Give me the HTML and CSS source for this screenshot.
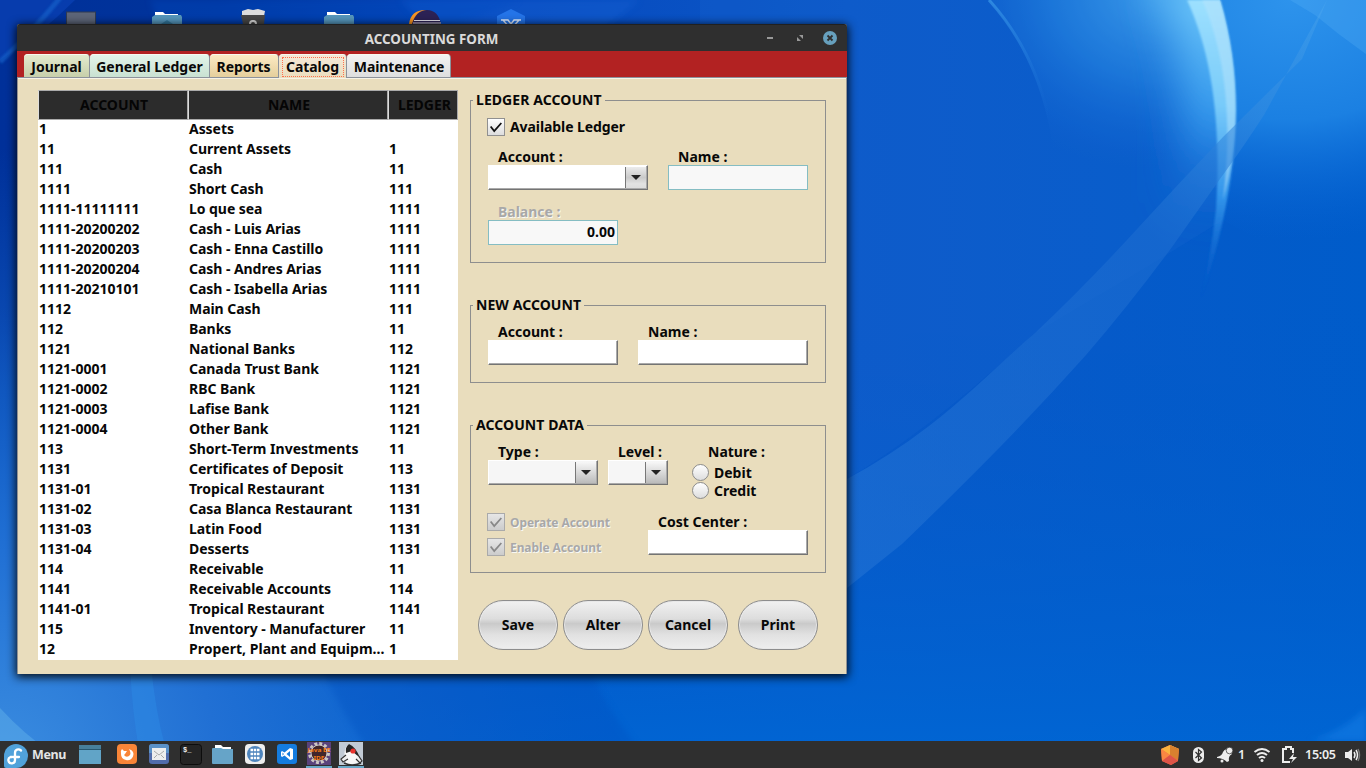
FILE: index.html
```html
<!DOCTYPE html>
<html lang="en">
<head>
<meta charset="utf-8">
<title>Accounting Form</title>
<link rel="stylesheet" href="styles.css">
</head>
<body>
<div class="desktop">
<svg class="wallpaper" viewBox="0 0 1366 768" preserveAspectRatio="none" aria-hidden="true">
<defs>
<linearGradient id="base"><stop offset="0" stop-color="#003099"/><stop offset=".16" stop-color="#00349c"/><stop offset=".36" stop-color="#0648bd"/><stop offset=".62" stop-color="#0b58c8"/><stop offset="1" stop-color="#005cca"/></linearGradient>
<linearGradient id="low" x1="0" y1="0" x2="0" y2="1"><stop offset=".4" stop-color="#0058c8" stop-opacity="0"/><stop offset="1" stop-color="#0066d4"/></linearGradient>
<radialGradient id="glowA" gradientUnits="userSpaceOnUse" cx="0" cy="0" r="1" gradientTransform="translate(1160 -10) scale(220 180)"><stop offset="0" stop-color="#46aaf2"/><stop offset=".5" stop-color="#2182e0" stop-opacity=".8"/><stop offset="1" stop-color="#1164d4" stop-opacity="0"/></radialGradient>
<radialGradient id="glowB" gradientUnits="userSpaceOnUse" cx="0" cy="0" r="1" gradientTransform="translate(1290 0) scale(330 240)"><stop offset="0" stop-color="#2d93ec"/><stop offset=".5" stop-color="#1b80e2"/><stop offset="1" stop-color="#0562d4" stop-opacity="0"/></radialGradient>
<radialGradient id="glowC" gradientUnits="userSpaceOnUse" cx="0" cy="768" r="620"><stop offset="0" stop-color="#3b8de0"/><stop offset=".35" stop-color="#2170d4"/><stop offset="1" stop-color="#1164ce" stop-opacity="0"/></radialGradient>
<linearGradient id="arc" x1="0" y1="0" x2="0" y2="1"><stop offset="0" stop-color="#a4e4ff"/><stop offset=".35" stop-color="#7fd0fc"/><stop offset=".65" stop-color="#369aee"/><stop offset="1" stop-color="#0a5ac8" stop-opacity="0"/></linearGradient>
<linearGradient id="rim" gradientUnits="userSpaceOnUse" x1="0" y1="0" x2="0" y2="230"><stop offset="0" stop-color="#6cc6fa"/><stop offset=".5" stop-color="#359aee"/><stop offset="1" stop-color="#1468d4" stop-opacity="0"/></linearGradient>
<linearGradient id="fade" x1="0" y1="0" x2="0" y2="1"><stop offset="0" stop-color="#46a8f0"/><stop offset="1" stop-color="#1668d4" stop-opacity="0"/></linearGradient>
<linearGradient id="band" gradientUnits="userSpaceOnUse" x1="847" y1="560" x2="1327" y2="0"><stop offset="0" stop-color="#2272d4"/><stop offset=".6" stop-color="#1c6cd0"/><stop offset="1" stop-color="#48a4ec" stop-opacity=".8"/></linearGradient>
<clipPath id="inside"><path d="M989 0H1220C1241 72 1240 142 1223 220L1190 320H1050V130Q1035 55 989 0Z"/></clipPath>
<filter id="soft" x="-50%" y="-50%" width="200%" height="200%"><feGaussianBlur stdDeviation="3"/></filter>
<filter id="wide" filterUnits="userSpaceOnUse" x="900" y="-100" width="460" height="500"><feGaussianBlur stdDeviation="20"/></filter>
<filter id="slight"><feGaussianBlur stdDeviation=".8"/></filter>
</defs>
<rect width="1366" height="768" fill="url(#base)"/>
<rect width="1366" height="768" fill="url(#low)"/>
<path d="M1220 0Q1250 110 1223 220L1366 300V0Z" fill="url(#glowB)"/>
<path d="M989 0Q1035 55 1050 130L1060 200H1216L1236 110L1220 0Z" fill="url(#glowA)"/>
<path d="M700 0H1220C1241 72 1240 142 1223 220L1150 265L1035 333Q930 430 847 479L700 550Z" fill="#1c68d0" opacity=".22"/>
<g clip-path="url(#inside)"><path d="M1192 -30Q1232 90 1205 210" fill="none" stroke="url(#rim)" stroke-width="70" filter="url(#wide)"/></g>
<path d="M989 0Q1034 50 1049 120" fill="none" stroke="url(#fade)" stroke-width="3" opacity=".55"/>
<path d="M1187 0H1220C1241 72 1240 142 1223 220Q1214 262 1200 302Q1211 255 1216 210C1221 130 1214 58 1187 0Z" fill="url(#arc)" opacity=".9" filter="url(#slight)"/>
<path d="M1202 0H1220C1241 72 1240 142 1223 200C1232 130 1228 58 1202 0Z" fill="#b8e4fc" opacity=".5" filter="url(#slight)"/>
<path d="M847 479Q890 456 929 426C967 397 1000 363 1035 333Q1086 285 1138 228Q1180 182 1223 137L1302 59L1327 0L1264 115Q1242 149 1220 179L1172 247Q1130 304 1086 355Q1045 401 1001 446T902 544L847 588Z" fill="url(#band)" opacity=".6"/>
<path d="M1315 15L1290 0H1366V54Q1340 36 1315 15Z" fill="#55b0f5" opacity=".3"/>
<path d="M1366 708Q1345 730 1310 741H1366Z" fill="#1680e8" opacity=".5" filter="url(#soft)"/>
<path d="M0 0H75Q40 35 0 60Z" fill="#0b44bb" opacity=".6"/>
<path d="M60 -2Q32 32 0 62" fill="none" stroke="#1764cc" stroke-width="5" opacity=".65" filter="url(#slight)"/>
<path d="M400 0H640L590 40H440Z" fill="#1262d4" opacity=".4" filter="url(#soft)"/>
<path d="M150 0H520L420 40H165Z" fill="#064cc2" opacity=".35" filter="url(#soft)"/>
<rect width="1366" height="768" fill="url(#glowC)"/>
<path d="M130 665Q132 710 139 750H166Q155 710 151 665Z" fill="#2b88e4" opacity=".55"/>
<path d="M0 708Q25 735 48 750H0Z" fill="#59a9e8" opacity=".6"/>
<path d="M320 665Q340 710 368 750H640Q600 700 590 665Z" fill="#0650c0" opacity=".35" filter="url(#soft)"/>
</svg>
<div class="launchers" aria-hidden="true">
<svg viewBox="0 0 500 24"><rect x="6.500" y="12" width="29" height="14" fill="#5d6578" stroke="#303b51"/><path d="M95 15V12H103L105 14H118V17H95Z" fill="#fff"/><path d="M92 17L95 15H121L122 17V24H92Z" fill="#5697bd"/><path d="M101 24L107 20L113 24" fill="#33789e"/><path d="M182 11L188 9L193 10L198 9L205 11L204 16H182Z" fill="#ddd"/><path d="M181 15H205L204 24H183Z" fill="#464646"/><circle cx="193" cy="24" r="3" fill="none" stroke="#ddd" stroke-width="2"/><path d="M267 15V12H275L277 14H290V17H267Z" fill="#fff"/><path d="M264 17L267 15H293L294 17V24H264Z" fill="#5697bd"/><path d="M349 24Q351 9 367 10Q355 14 354 24Z" fill="#f79423"/><path d="M352 24Q356 10 367 10T381 24Z" fill="#2c2255"/><path d="M354 20.500H380M353 23H381" stroke="#e8e5f0"/><path d="M437 16L451 9L465 16V24H437Z" fill="#2474e8"/><path d="M441 20H448L451 24L454 20H461M443 20L449 27M459 20L453 27" fill="none" stroke="#dceaff" stroke-width="1.500"/></svg>
</div>
<main class="window">
<header class="titlebar"><span class="caption">ACCOUNTING FORM</span>
<svg class="controls" viewBox="0 0 80 20"><path d="M4 10H10" stroke="#999" stroke-width="2"/><path d="M36 7H40V11ZM34 9V13H38Z" fill="#999"/><circle cx="67" cy="10" r="7" fill="#67a0bd"/><path d="M64.500 7.500L69.500 12.500M69.500 7.500L64.500 12.500" stroke="#2f2f2f" stroke-width="1.800"/></svg></header>
<nav class="tabs"><span class="tab journal">Journal</span><span class="tab general">General Ledger</span><span class="tab reports">Reports</span><span class="tab catalog"><span class="focus">Catalog</span></span><span class="tab maintenance">Maintenance</span></nav>
<section class="content">
<table class="accounts"><colgroup><col class="c1"><col class="c2"><col class="c3"></colgroup>
<thead><tr><th>ACCOUNT</th><th>NAME</th><th>LEDGER</th></tr></thead>
<tbody>
<tr><td>1</td><td>Assets</td><td></td></tr>
<tr><td>11</td><td>Current Assets</td><td>1</td></tr>
<tr><td>111</td><td>Cash</td><td>11</td></tr>
<tr><td>1111</td><td>Short Cash</td><td>111</td></tr>
<tr><td>1111-11111111</td><td>Lo que sea</td><td>1111</td></tr>
<tr><td>1111-20200202</td><td>Cash - Luis Arias</td><td>1111</td></tr>
<tr><td>1111-20200203</td><td>Cash - Enna Castillo</td><td>1111</td></tr>
<tr><td>1111-20200204</td><td>Cash - Andres Arias</td><td>1111</td></tr>
<tr><td>1111-20210101</td><td>Cash - Isabella Arias</td><td>1111</td></tr>
<tr><td>1112</td><td>Main Cash</td><td>111</td></tr>
<tr><td>112</td><td>Banks</td><td>11</td></tr>
<tr><td>1121</td><td>National Banks</td><td>112</td></tr>
<tr><td>1121-0001</td><td>Canada Trust Bank</td><td>1121</td></tr>
<tr><td>1121-0002</td><td>RBC Bank</td><td>1121</td></tr>
<tr><td>1121-0003</td><td>Lafise Bank</td><td>1121</td></tr>
<tr><td>1121-0004</td><td>Other Bank</td><td>1121</td></tr>
<tr><td>113</td><td class="long">Short-Term Investments</td><td>11</td></tr>
<tr><td>1131</td><td>Certificates of Deposit</td><td>113</td></tr>
<tr><td>1131-01</td><td>Tropical Restaurant</td><td>1131</td></tr>
<tr><td>1131-02</td><td>Casa Blanca Restaurant</td><td>1131</td></tr>
<tr><td>1131-03</td><td>Latin Food</td><td>1131</td></tr>
<tr><td>1131-04</td><td>Desserts</td><td>1131</td></tr>
<tr><td>114</td><td>Receivable</td><td>11</td></tr>
<tr><td>1141</td><td>Receivable Accounts</td><td>114</td></tr>
<tr><td>1141-01</td><td>Tropical Restaurant</td><td>1141</td></tr>
<tr><td>115</td><td>Inventory - Manufacturer</td><td>11</td></tr>
<tr><td>12</td><td class="long">Propert, Plant and Equipm...</td><td>1</td></tr>
</tbody></table>
<div class="form">
<section class="group ledger"><h2>LEDGER ACCOUNT</h2>
<div class="check"><svg viewBox="0 0 18 18"><path d="M3 8.500L7 13.500L15 4.500" /></svg><span>Available Ledger</span></div>
<div class="row first"><div class="field w160"><span class="label">Account :</span><div class="combo white"><i></i></div></div><div class="field w140"><span class="label">Name :</span><div class="input locked"></div></div></div>
<div class="row second"><div class="field w130"><span class="label dim">Balance :</span><div class="input locked">0.00</div></div></div>
</section>
<section class="group fresh"><h2>NEW ACCOUNT</h2>
<div class="row"><div class="field w130"><span class="label">Account :</span><div class="input"></div></div><div class="field w170"><span class="label">Name :</span><div class="input"></div></div></div>
</section>
<section class="group data"><h2>ACCOUNT DATA</h2>
<div class="row tight"><div class="field w110"><span class="label">Type :</span><div class="combo"><i></i></div></div><div class="field w60"><span class="label">Level :</span><div class="combo"><i></i></div></div>
<div class="nature"><span class="label">Nature :</span><div class="radio"><i></i>Debit</div><div class="radio"><i></i>Credit</div></div></div>
<div class="row bottom"><div class="checks"><div class="check off"><svg viewBox="0 0 18 18"><path d="M3 8.500L7 13.500L15 4.500"/></svg><span>Operate Account</span></div><div class="check off"><svg viewBox="0 0 18 18"><path d="M3 8.500L7 13.500L15 4.500"/></svg><span>Enable Account</span></div></div><div class="field w160"><span class="label">Cost Center :</span><div class="input"></div></div></div>
</section>
<div class="actions"><span class="button">Save</span><span class="button">Alter</span><span class="button">Cancel</span><span class="button print">Print</span></div>
</div>
</section>
</main>
<footer class="panel">
<svg class="menu-icon" viewBox="0 0 24 24"><path d="M0 12A12 12 0 1 1 12 24H2Q0 24 0 22Z" fill="#51a2da"/><path d="M8 13H6.500A3.300 3.300 0 1 0 11 16V9C11 5.500 14.500 4.500 17 6.500M9 13H15" fill="none" stroke="#fff" stroke-width="2.300" stroke-linecap="round"/></svg>
<span class="menu">Menu</span>
<svg class="apps" viewBox="0 0 290 27">
<path d="M0 4H22V23H0Z" fill="#61a4c7"/><path d="M0 4H22V8H0Z" fill="#477f9b"/><path d="M0 8.500H22" stroke="#28576f"/>
<rect x="38" y="3" width="20" height="20" rx="4" fill="#f98538"/><path d="M42 13Q41 10 43 8L45 10L48 10L46 13L45 14Q47 17 50 15Q53 13 50 8Q56 10 54 15.500Q52 20 47 19Q42 18 42 13Z" fill="#fff"/>
<rect x="70" y="3" width="20" height="20" rx="3" fill="#526cab"/><path d="M70 6Q70 3 73 3H87Q90 3 90 6V12H70Z" fill="#5a91c8"/><rect x="73" y="7" width="14" height="12" fill="#eee"/><path d="M75 10L80 14L85 10M75 17L78 14M85 17L82 14" fill="none" stroke="#aaa"/>
<rect x="101.500" y="3.500" width="21" height="20" rx="3" fill="#242424" stroke="#0c0c0c"/><text x="104" y="11" class="prompt">$_</text>
<path d="M136 8V4H142L144 6H152V9H136Z" fill="#fff"/><path d="M133 8Q133 7 134 7H142L144 8H154V22Q154 23 153 23H134Q133 23 133 22Z" fill="#66a4c8"/>
<rect x="166" y="3" width="20" height="20" rx="4" fill="#eee"/><circle cx="176" cy="13" r="8" fill="#4d84bd"/><path d="M171.500 9H180.500M171.500 13H180.500M171.500 17H180.500" stroke="#fff" stroke-width="2.500" stroke-dasharray="2.500 .75"/>
<rect x="198" y="3" width="20" height="20" rx="3" fill="#147cdf"/><path d="M211 7L214 8V18L211 19L205.500 14.500L203 16L202 15V11L203 10L205.500 11.500ZM211 10L207.500 13L211 16Z M203.500 11.500V14.500L205 13Z" fill="#fff" fill-rule="evenodd"/>
<rect x="228" y="1" width="24" height="23" fill="#59427b"/><circle cx="240" cy="12" r="9" fill="none" stroke="#ccc6c3" stroke-width="4" stroke-dasharray="2.800 1.910"/><circle cx="240" cy="12" r="8" fill="#42262b" stroke="#ccc6c3"/><text x="240" y="11" class="eclipse" textLength="23" lengthAdjust="spacingAndGlyphs">Java EE</text><text x="240" y="19" class="eclipse" textLength="11" lengthAdjust="spacingAndGlyphs">IDE</text><path d="M227 26H253" stroke="#69a8c7" stroke-width="2"/>
<rect x="260" y="1" width="24" height="23" fill="#c2cbd5"/><path d="M267 22Q263 8 270 3Q279 9 282 20Q274 25 267 22Z" fill="#f7f7f7"/><path d="M267 12Q266 6 270 3Q277 6 281 17L273 10Z" fill="#252525"/><path d="M267 14L262 18L264 21L269 18M279 14L283 20L281 22L277 18" fill="#eee" stroke="#333" stroke-width="1.200"/><path d="M265 22Q273 26 282 22" fill="none" stroke="#333" stroke-width="1.500"/><circle cx="274" cy="10" r="2.600" fill="#e9332d"/><path d="M259 26H285" stroke="#69a8c7" stroke-width="2"/>
</svg>
<svg class="tray" viewBox="0 0 206 27"><path d="M10 4L19 8L18 20L11 24L2 20L1 8Z" fill="#f06b43"/><path d="M10 4L19 8L10 14L1 8Z" fill="#fbb33e"/><path d="M10 4L10 14L18 19L19 8Z" fill="#d8812f"/><path d="M1 8L10 14L2 20Z" fill="#fa8742"/><path d="M2 20L10 14L18 20L11 24Z" fill="#de5448"/>
<rect x="33" y="6" width="11" height="16" rx="5.500" fill="#ededed"/><path d="M35.500 11L41.500 17L38.500 19.500V8.500L41.500 11L35.500 17" fill="none" stroke="#303030" stroke-width="1.200"/>
<path d="M57 16Q62 15 63 11Q65 7 69 9L72 13Q68 15 69 20L67 21Q63 17 57 17Z" fill="#ededed"/><circle cx="69.500" cy="9.500" r="3.300" fill="#ededed" stroke="#303030" stroke-width=".7"/><circle cx="62" cy="20" r="1.500" fill="#ededed"/><text x="78" y="18">1</text>
<path d="M94.500 11Q102 5 109.500 11M97 14Q102 10 107 14M99 17Q102 14.500 105 17" fill="none" stroke="#ededed" stroke-width="2"/><circle cx="102" cy="19.500" r="1.500" fill="#ededed"/>
<path d="M133 12V8H131V6H126V8H123V21H130" fill="none" stroke="#ededed" stroke-width="2"/><path d="M134 12L129 18H133L131 22L137 16H133Z" fill="#ededed"/>
<text x="145" y="18" textLength="31">15:05</text><path d="M185 11H188L192 8V20L188 17H185Z" fill="#ededed"/><path d="M194 11Q196 14 194 17M196 9Q199 14 196 19" fill="none" stroke="#ededed" stroke-width="1.500"/><path d="M198 8Q201 14 198 20" fill="none" stroke="#777" stroke-width="1.500"/></svg>
</footer>
</div>
</body></html>
```
FILE: styles.css
```css
*{box-sizing:border-box}
body{margin:0;overflow:hidden;font:700 14px/20px "Noto Sans",sans-serif;color:#080808}
.desktop{position:relative;width:1366px;height:768px;overflow:hidden;background:#0055c2}
.wallpaper{position:absolute;inset:0;width:1366px;height:768px}
.launchers{position:absolute;left:60px;top:0;width:500px;height:24px}
.launchers svg{display:block;width:500px;height:24px}
.window{position:absolute;left:17px;top:24px;width:830px;height:650px;display:flex;flex-direction:column;background:#e9ddbd;border-radius:3px 3px 0 0;box-shadow:0 2px 10px 1px rgba(0,0,0,.9)}
.titlebar{height:27px;background:#2f2f2f;border-top:1px solid #202020;border-radius:3px 3px 0 0;display:grid;grid-template-columns:746px 80px;align-items:center}
.caption{padding-left:83px;text-align:center;color:#dadada;font-size:13.400px;line-height:26px;padding-top:1px}
.controls{width:80px;height:20px;margin-top:-2px}
.tabs{height:27px;padding:3px 0 0 7px;background:#b22222;display:flex;border-bottom:1px solid #8c929b}
.tab{height:23px;border:1px solid #8c929b;border-width:0 1px 0 0;border-radius:4px 4px 0 0;text-align:center;line-height:26px;white-space:nowrap;box-shadow:inset 0 1px #f8f8ee}
.journal{width:66px;background:linear-gradient(#e4ebd0,#c7cfaa)}
.general{width:120px;background:linear-gradient(#e4f5ea,#c9e1d2)}
.reports{width:69px;background:linear-gradient(#fcebc5,#e5cf9c);letter-spacing:-.1px;padding-right:1px}
.catalog{width:68px;height:25px;background:linear-gradient(#f6e9d8,#e9ddbd);padding:3px 2px 2px 3px}
.focus{display:block;height:20px;border:1px dotted #ff704d;line-height:17px;letter-spacing:-.1px;padding-right:1px}
.maintenance{width:104px;background:linear-gradient(#f3f3f3,#dedede);letter-spacing:-.1px;padding-left:1px}
.content{height:596px;border:1px solid #929292;border-width:0 1px 0;box-shadow:inset 0 1px #f7f3e6;padding:12px 20px;display:flex;gap:12px}
.accounts{width:420px;height:570px;border-spacing:0;table-layout:fixed;background:#fff;flex:none}
.c1{width:150px}.c2{width:200px}.c3{width:70px}
.accounts th{height:30px;padding:0 0 0 2px;background:#2c2c2c;color:#050505;border:1px solid #aaa;border-left-color:#ddd;font-size:14px}
.accounts th:last-child{padding-left:3px}
.accounts td{height:20px;padding:0 0 2px 1px;line-height:18px;white-space:nowrap}
.accounts td:nth-child(2){letter-spacing:-.05px}
.accounts td.long{letter-spacing:.02px}
.form{width:356px;padding-top:10px;flex:none}
.group{position:relative;border:1px solid #8e8e8e;padding:18px 17px 0}
.group h2{position:absolute;left:2px;top:-11px;margin:0;padding:0 3px;background:#e9ddbd;font-size:14px;line-height:20px;white-space:nowrap;letter-spacing:.07px}
.ledger{height:163px;padding-top:17px}.fresh{height:78px;margin-top:42px}.data{height:148px;margin-top:42px}
.check{display:flex;gap:5px;height:18px;margin-left:-1px;line-height:18px;letter-spacing:-.08px}
.check svg{width:18px;height:18px;border:1px solid #909090;background:linear-gradient(#fff,#ddd)}
.check path{fill:none;stroke:#111;stroke-width:2}
.row{display:flex;gap:20px}.first{margin-top:13px}.second{margin-top:14px}.tight{gap:10px;height:70px}.bottom{justify-content:space-between}
.field{height:41px}.label{display:block;height:16px;line-height:16px;padding-left:10px;white-space:nowrap}
.w160{width:160px}.w140{width:140px}.w130{width:130px}.w170{width:170px}.w110{width:110px}.w60{width:60px}
.input,.combo{height:25px;background:#fff;border:1px solid #fff;border-right:1px solid #747474;border-bottom:1px solid #747474;box-shadow:inset -1px -1px #aaa}
.input.locked{background:#f8f8f8;border:1px solid #85bdc3;box-shadow:none;text-align:right;padding-right:2px;line-height:22px}
.combo{background:#f6f6f6;display:flex;justify-content:flex-end;padding:1px 1px 1px 0}
.combo.white{background:#fff}
.combo i{width:21px;height:21px;border-left:1px solid #777;background:linear-gradient(#f7f7f7,#bbb);display:flex;align-items:center;justify-content:center}
.combo.white i{background:linear-gradient(#ececec,#cacaca 50%,#e2e2e2 80%,#ddd)}
.combo i::after{content:"";border:5px solid transparent;border-top-color:#222;border-bottom:0}
.dim{color:#a8a8a8;text-shadow:1px 1px #f8f8f5}
.nature{padding-left:14px}.nature .label{padding-left:16px;margin-bottom:4px}
.radio{display:flex;gap:5px;height:18px;line-height:18px}
.radio i{width:17px;height:17px;border:1px solid #8c8c8c;border-radius:50%;background:linear-gradient(#fff,#ddd)}
.checks{display:flex;flex-direction:column;gap:7px;margin-top:-1px}
.off{font-size:12px;line-height:20px;color:#a8a8a8;text-shadow:1px 1px #f8f8f5}
.off svg{border-color:#aaa;background:linear-gradient(#e6e6e6,#ccc)}
.off path{stroke:#888}
.actions{display:flex;gap:5px;margin:27px 8px 0}
.button{width:80px;height:50px;border:1px solid #8d8d8d;border-radius:25px;background:linear-gradient(#f1f1f1,#ddd 37%,#cacaca 47%,#e1e1e1 70%,#eee);text-align:center;line-height:48px;box-shadow:inset 0 0 0 1px #e8e8e8}
.print{margin-left:5px}
.panel{position:absolute;left:0;right:0;bottom:0;height:27px;background:#2f2f2f;display:flex;align-items:center;color:#e5e5e5;font-size:12.500px}
.menu-icon{width:24px;height:24px;margin:2px 0 0 4px}
.menu{width:47px;margin-left:4px;letter-spacing:-.4px}
.apps{width:290px;height:27px}
.apps .prompt{font:700 7px "Liberation Mono",monospace;fill:#eee}
.apps .eclipse{font:700 5.500px "Noto Sans",sans-serif;fill:#f57c16;text-anchor:middle}
.tray{width:206px;height:27px;margin-left:auto}
.tray text{font:600 12.500px "Noto Sans",sans-serif;fill:#eee}
```
